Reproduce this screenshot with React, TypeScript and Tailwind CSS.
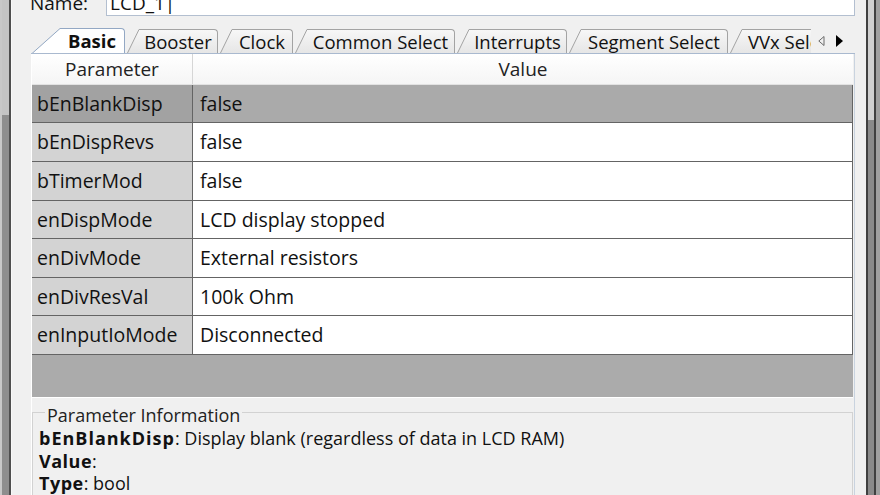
import React from "react"

type Row = { name: string; value: string; h: string; selected?: boolean }
type Tab = { label: string; w: string; active?: boolean; left?: boolean }

const rows: Row[] = [
  { name: "bEnBlankDisp", value: "false", h: "h-[37px]", selected: true },
  { name: "bEnDispRevs", value: "false", h: "h-[38px]" },
  { name: "bTimerMod", value: "false", h: "h-[38px]" },
  { name: "enDispMode", value: "LCD display stopped", h: "h-[37px]" },
  { name: "enDivMode", value: "External resistors", h: "h-[38px]" },
  { name: "enDivResVal", value: "100k Ohm", h: "h-[37px]" },
  { name: "enInputIoMode", value: "Disconnected", h: "h-[38px]" },
]

const tabs: Tab[] = [
  { label: "Basic", w: "w-[65px]", active: true },
  { label: "Booster", w: "w-[79px]" },
  { label: "Clock", w: "w-[61px]" },
  { label: "Common Select", w: "w-[148px]" },
  { label: "Interrupts", w: "w-[98px]" },
  { label: "Segment Select", w: "w-[147px]" },
  { label: "VVx Select", w: "w-[110px]", left: true },
]

function TabItem({ tab }: { tab: Tab }) {
  // active tab: long slanted edge, white, sits over the bar line
  if (tab.active) {
    return (
      <div className="flex shrink-0 items-end relative z-10 -mb-px">
        <svg width="28" height="26" className="block">
          <polygon points="0,26 28,1 28,26" fill="#ffffff" />
          <line x1="0" y1="25.5" x2="28" y2="0.5" stroke="#93a8c4" strokeWidth="1" />
        </svg>
        <div
          className={`${tab.w} h-[26px] bg-white border-t border-r border-[#93a8c4] rounded-tr-[4px] flex items-center justify-center font-bold text-[18.5px] text-[#111] pb-[1px]`}
        >
          {tab.label}
        </div>
      </div>
    )
  }
  return (
    <div className="flex shrink-0 items-end">
      <svg width="12" height="24" className="block">
        <defs>
          <linearGradient id="tabfill" x1="0" y1="0" x2="0" y2="1">
            <stop offset="0" stopColor="#f7f7f7" />
            <stop offset="1" stopColor="#e6e6e6" />
          </linearGradient>
        </defs>
        <polygon points="0,24 12,1 12,24" fill="url(#tabfill)" />
        <line x1="0.5" y1="24" x2="12" y2="0.5" stroke="#a3a3a3" strokeWidth="1" />
      </svg>
      <div
        className={`${tab.w} h-[24px] bg-gradient-to-b from-[#f7f7f7] to-[#e6e6e6] border-t border-r border-[#a3a3a3] rounded-tr-[4px] flex items-center text-[18.5px] text-[#111] whitespace-nowrap ${
          tab.left ? "justify-start pl-[6px]" : "justify-center"
        }`}
      >
        {tab.label}
      </div>
    </div>
  )
}

export default function App() {
  return (
    <div
      className="w-[880px] h-[495px] overflow-hidden bg-[#f0f0f0] flex"
      style={{ fontFamily: '"Open Sans", "Liberation Sans", sans-serif' }}
    >
      {/* left window frame */}
      <div className="flex w-[12px] shrink-0">
        <div className="w-[2px] bg-[#c8c8c8]" />
        <div className="w-[7px] flex flex-col">
          <div className="h-[115px] bg-[#c4c4c4]" />
          <div className="flex-1 bg-[#8e8e8e]" />
        </div>
        <div className="w-[2px] bg-[#4e4e4e]" />
        <div className="w-[1px] bg-[#f8f8f8]" />
      </div>

      {/* main area */}
      <div className="flex-1 flex flex-col min-w-0">
        {/* name row */}
        <div className="flex items-center h-[26px] -mt-[10px] text-[19px] text-[#111]">
          <span className="ml-[18px] w-[76px]">Name:</span>
          <div className="w-[749px] h-[26px] bg-white border border-[#b3bfd0] flex items-center pl-[3px]">
            LCD_1|
          </div>
        </div>

        {/* tabs */}
        <div className="mt-[12px] ml-[19px] mr-[11px] flex items-end border-b border-[#a9b9cf]">
          <div className="w-[780px] overflow-hidden flex items-end gap-[2px] pl-[1px]">
            {tabs.map((t) => (
              <TabItem key={t.label} tab={t} />
            ))}
          </div>
          <div className="flex-1 h-[25px] flex items-center gap-[11px] pl-[7px]">
            <svg width="7" height="10">
              <polygon points="6,0.5 0.8,5 6,9.5" fill="none" stroke="#6a6a6a" strokeWidth="1" />
            </svg>
            <svg width="7" height="12">
              <polygon points="0,0 7,6 0,12" fill="#000" />
            </svg>
          </div>
        </div>

        {/* tab pane */}
        <div className="ml-[19px] mr-[11px] flex-1 flex flex-col border-l border-r border-l-white border-r-[#c9d3df] pr-[1px]">
          {/* table header */}
          <div className="flex h-[31px] border-b border-[#e2e2e2] bg-gradient-to-b from-white to-[#f5f5f5] text-[19px] text-[#222]">
            <div className="w-[161px] border-r border-[#d6d6d6] flex items-center justify-center">Parameter</div>
            <div className="flex-1 flex items-center justify-center">Value</div>
          </div>

          {/* rows */}
          {rows.map((r) => (
            <div
              key={r.name}
              className={`flex ${r.h} box-content border-b border-r border-[#646464] text-[19.5px] text-[#111]`}
            >
              <div
                className={`w-[161px] border-r border-[#646464] flex items-center pl-[5px] ${
                  r.selected ? "bg-[#a2a2a2]" : "bg-[#d3d3d3]"
                }`}
              >
                {r.name}
              </div>
              <div className={`flex-1 flex items-center pl-[7px] ${r.selected ? "bg-[#aaaaaa]" : "bg-white"}`}>
                {r.value}
              </div>
            </div>
          ))}
          <div className="h-[42px] bg-[#ababab]" />

          {/* parameter information */}
          <div className="flex-1 border-t border-white pt-[1px]">
            <fieldset className="h-full border border-[#d2d2d2] pl-[6px] pt-[2px] text-[18px] leading-[22.5px] text-[#111]">
              <legend className="ml-[6px] px-[2px] pt-[6px] leading-[20px] text-[#222]">Parameter Information</legend>
              <div>
                <b className="tracking-[1px]">bEnBlankDisp</b>: Display blank (regardless of data in LCD RAM)
              </div>
              <div>
                <b className="tracking-[0.5px]">Value</b>:
              </div>
              <div>
                <b className="tracking-[0.5px]">Type</b>: bool
              </div>
            </fieldset>
          </div>
        </div>
      </div>

      {/* right window frame */}
      <div className="flex w-[14px] shrink-0">
        <div className="w-[2px] bg-[#404040]" />
        <div className="w-[6px] flex flex-col">
          <div className="h-[120px] bg-[#d0d0d0]" />
          <div className="flex-1 bg-[#8a8a8a]" />
        </div>
        <div className="w-[2px] bg-[#404040]" />
        <div className="w-[4px] bg-[#a0a0a0]" />
      </div>
    </div>
  )
}
